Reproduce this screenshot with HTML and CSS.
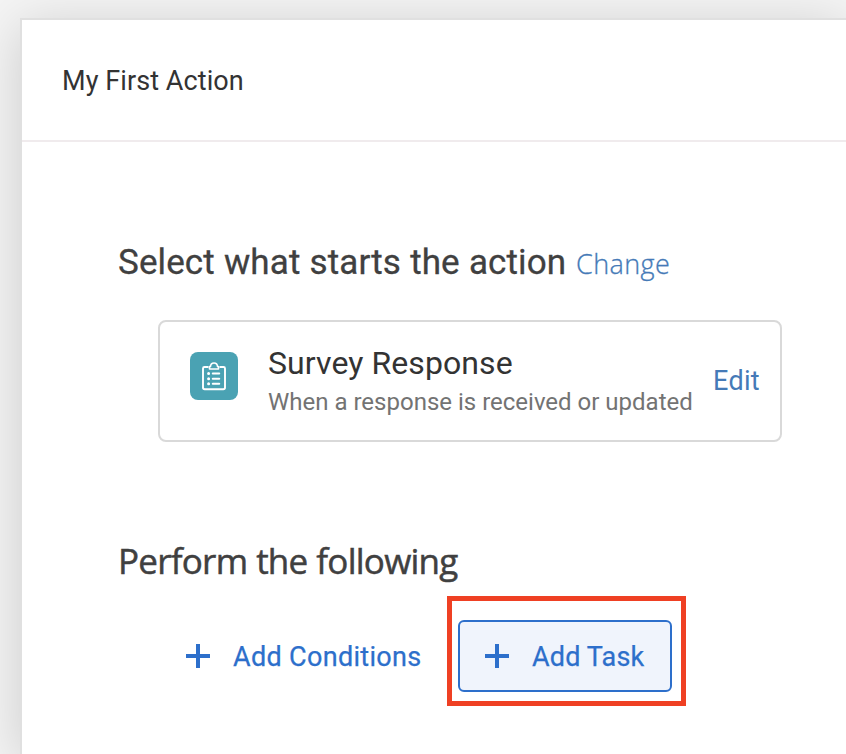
FILE: index.html
```html
<!DOCTYPE html>
<html lang="en">
<head>
<meta charset="utf-8">
<title>My First Action</title>
<link rel="stylesheet" href="styles.css">
</head>
<body>
<main class="panel">
  <header class="panel-header"><h1 class="title">My First Action</h1></header>
  <section class="trigger">
    <div class="heading-row">
      <h2 class="heading heading-select">Select what starts the action</h2>
      <a class="change">Change</a>
    </div>
    <div class="card">
      <svg class="card-icon" viewBox="0 0 48 48" fill="none">
        <rect width="48" height="48" rx="8" fill="#4aa2b3"/>
        <path d="M18.500 15H14.500Q13 15 13 16.500V35.500Q13 37.200 14.700 37.200H33.300Q35 37.200 35 35.500V16.500Q35 15 33.500 15H29.500" stroke="#fff" stroke-width="1.900"/>
        <path d="M19.500 17H28.500V14.500H27.500Q27.300 11 24 11T20.500 14.500H19.500Z" stroke="#fff" stroke-width="1.600" stroke-linejoin="round"/>
        <path d="M22.800 21.500H29.200M22.800 26.700H29.200M22.800 31.800H29.200" stroke="#fff" stroke-width="2.100" stroke-linecap="round"/>
        <path d="M18.600 21.500h.01M18.600 26.700h.01M18.600 31.800h.01" stroke="#fff" stroke-width="3" stroke-linecap="round"/>
      </svg>
      <div class="card-text">
        <div class="card-title">Survey Response</div>
        <div class="card-subtitle">When a response is received or updated</div>
      </div>
      <a class="edit">Edit</a>
    </div>
  </section>
  <section class="tasks">
    <h2 class="heading heading-perform">Perform the following</h2>
    <div class="actions">
      <button class="action">
        <svg class="plus" viewBox="0 0 24 24"><path d="M10 0h4v10h10v4H14v10h-4V14H0v-4h10z" fill="#2d6fcb"/></svg>
        <span class="label label-conditions">Add Conditions</span>
      </button>
      <div class="highlight">
        <button class="action action-task">
          <svg class="plus" viewBox="0 0 24 24"><path d="M10 0h4v10h10v4H14v10h-4V14H0v-4h10z" fill="#2d6fcb"/></svg>
          <span class="label label-task">Add Task</span>
        </button>
      </div>
    </div>
  </section>
</main>
</body>
</html>
```
FILE: styles.css
```css
* { box-sizing: border-box; }
body {
  margin: 0;
  height: 754px;
  overflow: hidden;
  padding: 18px 0 0 20px;
  background: #f4f4f4;
  font-family: Roboto, "Liberation Sans", sans-serif;
}
.panel {
  height: 736px;
  background: #fff;
  border: solid #e0e0e0;
  border-width: 2px 0 0 2px;
  box-shadow: 0 8px 50px rgba(0, 0, 0, .16);
}
.panel-header {
  height: 122px;
  padding: 43px 40px 0;
  border-bottom: 2px solid #f0ebed;
}
h1, h2 { margin: 0; font-weight: 400; white-space: nowrap; }
.title { font-size: 27px; line-height: 36px; letter-spacing: .08px; color: #333; }
.trigger { padding: 97px 0 0 96px; }
.heading-row { display: flex; align-items: baseline; height: 81px; }
.heading {
  font: 400 35px/48px Roboto, sans-serif;
  color: #404040;
  -webkit-text-stroke: .3px #404040;
}
.heading-select { width: 458px; letter-spacing: .1px; word-spacing: .4px; }
.heading-perform {
  font-family: "Open Sans", sans-serif;
  letter-spacing: -.75px;
  word-spacing: .5px;
  -webkit-text-stroke-width: .5px;
}
.change {
  font: 300 27px/48px "Open Sans", sans-serif;
  letter-spacing: .4px;
  color: #457ab7;
  -webkit-text-stroke: .3px #457ab7;
}
.card {
  display: flex;
  width: 624px;
  height: 122px;
  margin-left: 40px;
  padding: 0 0 0 30px;
  border: 2px solid #d9d9d9;
  border-radius: 8px;
}
.card-icon { width: 48px; height: 48px; margin-top: 30px; flex: none; }
.card-text { width: 475px; padding: 20px 0 0 30px; flex: none; white-space: nowrap; }
.card-title { font-size: 32px; line-height: 42px; letter-spacing: .08px; color: #333; }
.card-subtitle { font-size: 24px; line-height: 36px; color: #737373; }
.edit { margin-top: 41px; font-size: 27px; line-height: 36px; letter-spacing: .3px; color: #457ab7; }
.tasks { padding: 95px 0 0 96px; }
.actions { display: flex; margin-top: 11px; }
.action {
  display: flex;
  align-items: center;
  width: 262px;
  height: 72px;
  margin: 24px 0 0 40px;
  padding: 0 0 0 28px;
  border: 0;
  background: none;
  color: #2d6fcb;
  font: 27px/36px Roboto, sans-serif;
  white-space: nowrap;
  -webkit-text-stroke: .25px #2d6fcb;
}
.label { padding-top: 2px; }
.label-conditions { letter-spacing: .32px; }
.label-task { letter-spacing: .15px; }
.plus { width: 24px; height: 24px; flex: none; margin-right: 23px; }
.highlight {
  width: 239px;
  height: 110px;
  margin-left: 27px;
  padding: 19px 6px;
  border: 5px solid #ef4023;
}
.action-task {
  width: 214px;
  margin: 0;
  padding-left: 25px;
  border: 2px solid #2d6fcb;
  border-radius: 6px;
  background: #f0f4fc;
}
```
